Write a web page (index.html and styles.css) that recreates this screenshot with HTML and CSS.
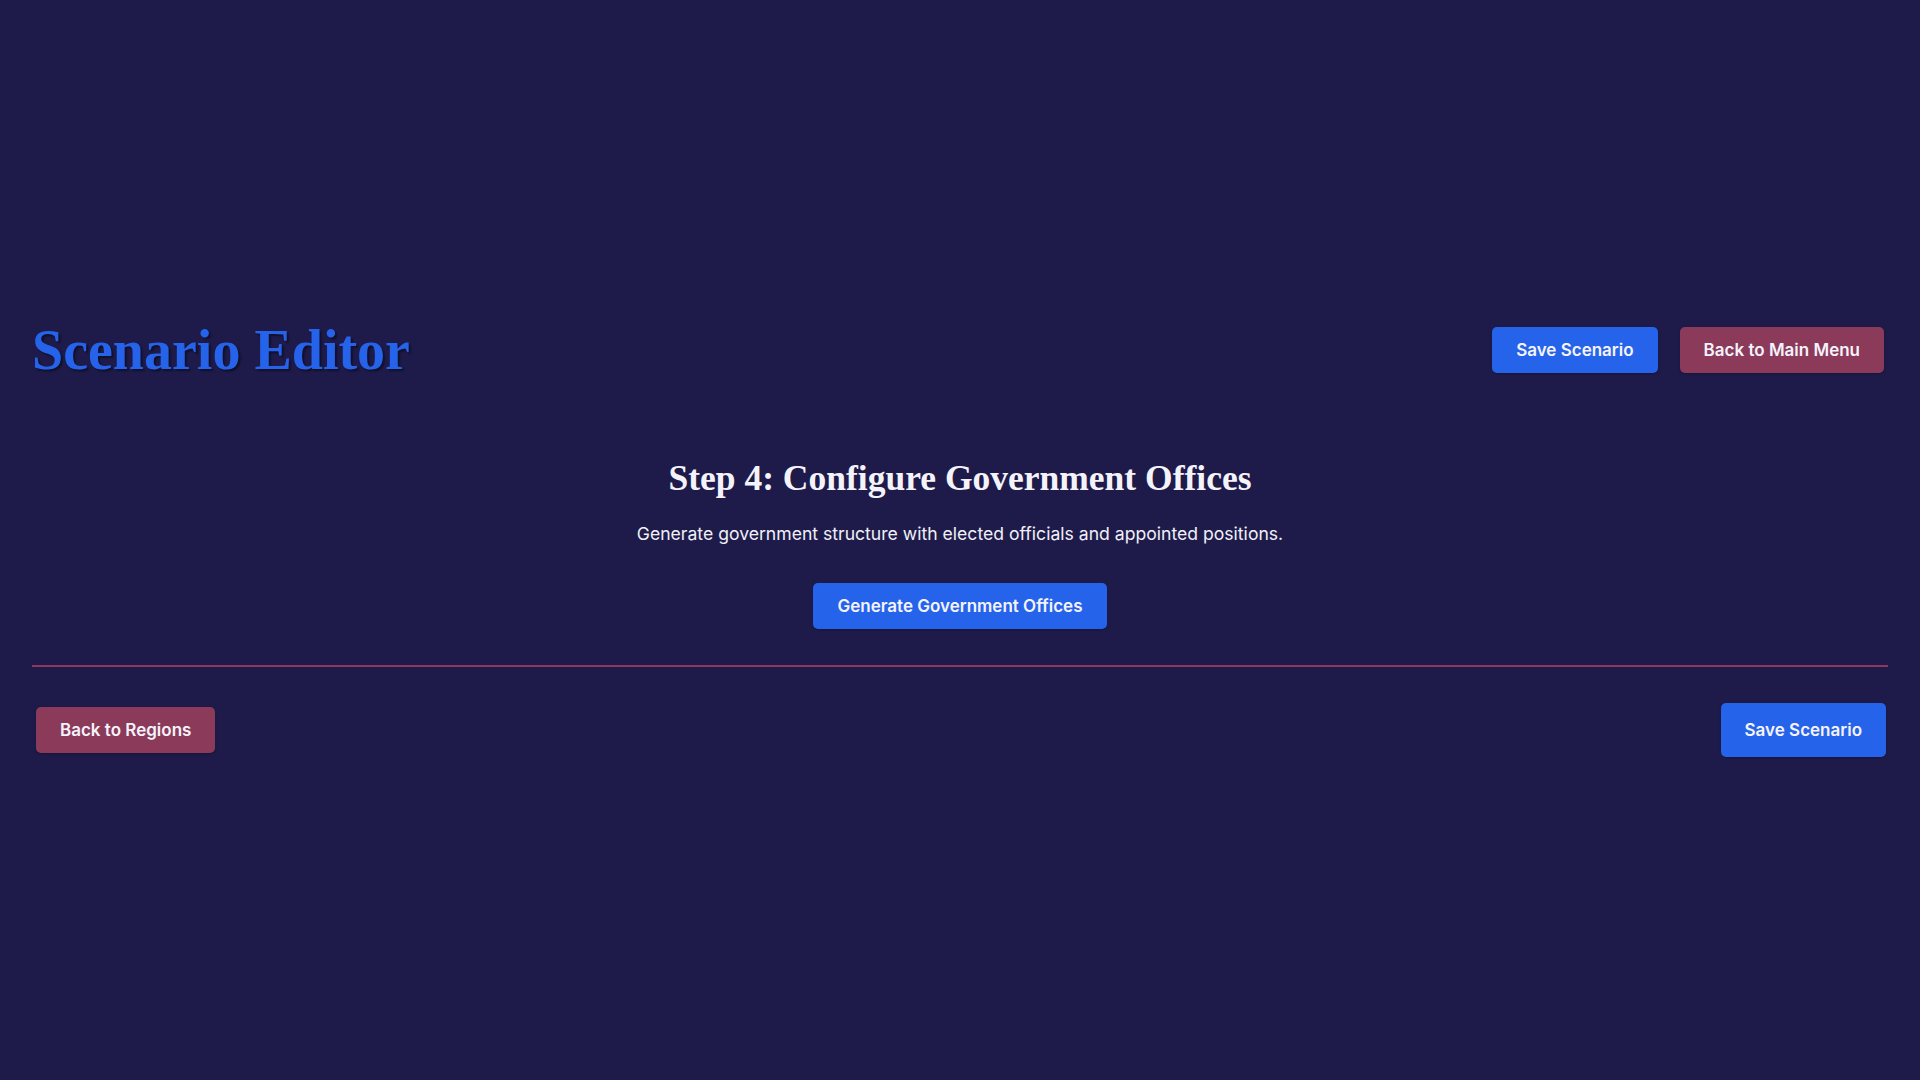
FILE: index.html
```html
<!DOCTYPE html>
<html>
  <head>
    <meta charset="utf-8">
    <title>Scenario Editor</title>
    <link rel="stylesheet" href="styles.css">
  </head>
  <body>
    <div class="editor">
      <div class="editor-header">
        <h1>Scenario Editor</h1>
        <div class="header-actions">
          <button class="btn btn-primary">Save Scenario</button>
          <button class="btn btn-secondary">Back to Main Menu</button>
        </div>
      </div>

      <div class="step">
        <h2>Step 4: Configure Government Offices</h2>
        <p>Generate government structure with elected officials and appointed positions.</p>
        <button class="btn btn-primary">Generate Government Offices</button>
      </div>

      <div class="step-nav">
        <button class="btn btn-secondary">Back to Regions</button>
        <button class="btn btn-primary btn-large">Save Scenario</button>
      </div>
    </div>
  </body>
</html>
```

FILE: styles.css
```css
html {
  font-family: Inter, "Noto Sans", sans-serif;
}

body {
  margin: 0;
  min-height: 100vh;
  padding-bottom: 5px;
  box-sizing: border-box;
  background-color: #1e1b4b;
  color: #f1f0f7;
  display: flex;
  flex-direction: column;
  justify-content: center;
}

.editor {
  padding: 0 32px;
}

.editor-header {
  display: flex;
  align-items: center;
  justify-content: space-between;
}

h1 {
  margin: 0;
  font-family: "Liberation Serif", "DejaVu Serif", serif;
  font-size: 56px;
  line-height: 64px;
  font-weight: bold;
  color: #2563eb;
  text-shadow: 2px 2px 2px rgba(0, 0, 0, 0.45);
}

.header-actions {
  display: flex;
  gap: 22px;
  margin-right: 4px;
}

.step {
  text-align: center;
  margin-top: 75px;
  padding-bottom: 36px;
  border-bottom: 2px solid #8b3a5a;
}

h2 {
  margin: 0;
  font-family: "Liberation Serif", "DejaVu Serif", serif;
  font-size: 35.5px;
  line-height: 42px;
  font-weight: bold;
  color: #f5f3fa;
}

.step p {
  margin: 24px 0 38px;
  font-size: 17.6px;
  line-height: 22px;
}

.step-nav {
  display: flex;
  align-items: center;
  justify-content: space-between;
  padding: 36px 2px 0 4px;
}

.btn {
  border: none;
  border-radius: 5px;
  padding: 11px 24px;
  font-family: Inter, "Noto Sans", sans-serif;
  font-size: 17px;
  line-height: 24px;
  font-weight: 600;
  color: #f5f3fa;
  cursor: pointer;
  box-shadow: 0 1px 3px rgba(0, 0, 0, 0.25);
}

.btn-primary {
  background-color: #2563eb;
}

.btn-secondary {
  background-color: #8b3a5a;
}

.btn-large {
  padding: 15px 24px;
}
```
